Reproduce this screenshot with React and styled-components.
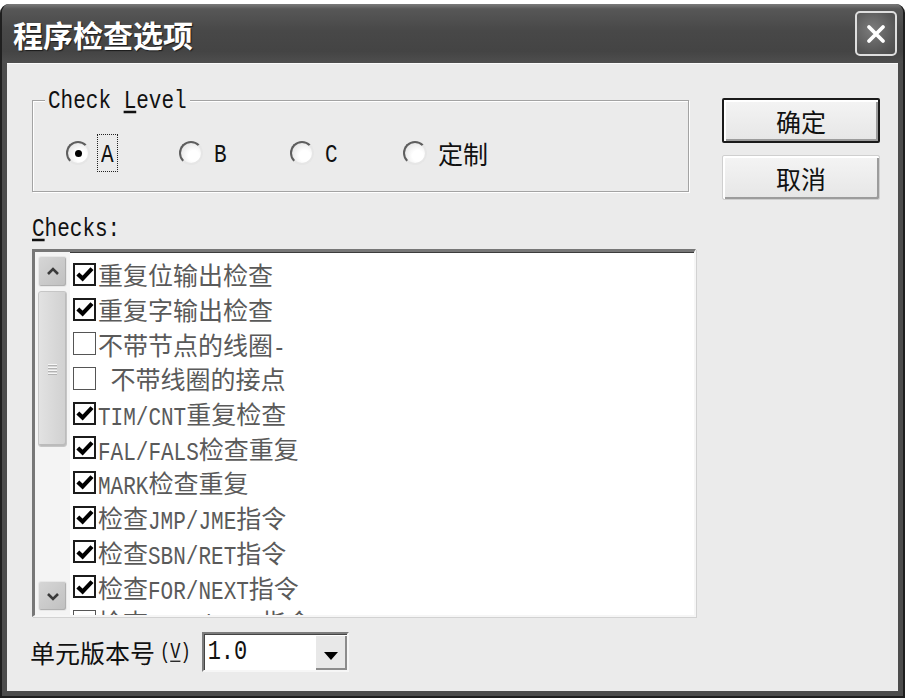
import React from 'react';
import styled, { createGlobalStyle } from 'styled-components';

const CJK = `"Noto Sans CJK SC", "Noto Sans", sans-serif`;
const MONO = `"Liberation Mono", "Noto Sans CJK SC", monospace`;

const GlobalStyle = createGlobalStyle`
  html, body { margin: 0; padding: 0; background: #fff; }
  body { width: 905px; height: 698px; overflow: hidden; font-family: ${CJK}; }
  #root { width: 905px; height: 698px; }
`;

const Window = styled.div`
  margin-top: 4px;
  width: 905px;
  height: 694px;
  box-sizing: border-box;
  display: flex;
  flex-direction: column;
  background: #4c4c4c;
  border: 2px solid #1f1f1f;
  border-top: 0;
  border-radius: 9px 9px 0 0;
  overflow: hidden;
`;

const TitleBar = styled.div`
  height: 59px;
  flex: none;
  display: flex;
  align-items: center;
  justify-content: space-between;
  padding: 0 6px 0 11px;
  background: linear-gradient(#7a7a7a 0, #575757 5px, #484848 45%, #444 80%, #4e4e4e 100%);
`;

const Title = styled.div`
  color: #fff;
  font-family: ${CJK};
  font-weight: 700;
  font-size: 30px;
  text-shadow: 1px 1px 1px #1a1a1a;
`;

const CloseButton = styled.div`
  width: 42px;
  height: 45px;
  box-sizing: border-box;
  border: 2px solid #dedede;
  border-radius: 5px;
  background: radial-gradient(circle at 40% 40%, #7c7c7c, #565656 70%, #4c4c4c);
  display: flex;
  align-items: center;
  justify-content: center;
`;

const Client = styled.div`
  flex: 1;
  margin: 0 5px 5px;
  background: #ebebeb;
  border-top: 1px solid #fafafa;
  display: grid;
  grid-template-columns: 664px 158px;
  column-gap: 26px;
  align-items: start;
  padding: 24px 0 0 25px;
`;

const LeftColumn = styled.div`
  display: flex;
  flex-direction: column;
`;

const GroupBox = styled.fieldset`
  margin: 0;
  min-width: 0;
  width: 657px;
  box-sizing: border-box;
  padding: 27px 0 24px 0;
  border: 1px solid #a3a3a3;
  box-shadow: inset 1px 1px 0 #fff, 1px 1px 0 #fff;
`;

const Legend = styled.legend`
  margin-left: 12px;
  padding: 0 3px;
  height: 24px;
  line-height: 24px;
  background: #ebebeb;
  color: #111;
`;

const Mono = styled.span`
  display: inline-block;
  font-family: ${MONO};
  font-size: ${(p) => p.$size || 21}px;
  white-space: pre;
  transform: scaleY(1.25);
`;

const Mnemonic = styled.span`
  text-decoration: underline;
  text-underline-offset: 2px;
`;

const RadioRow = styled.div`
  display: flex;
  align-items: center;
  height: 28px;
  padding-left: 33px;
`;

const RadioItem = styled.div`
  display: flex;
  align-items: center;
  gap: 11px;
  width: ${(p) => p.$w}px;
  flex: none;
`;

const RadioCircle = styled.span`
  width: 24px;
  height: 24px;
  box-sizing: border-box;
  border-radius: 50%;
  border: 2px solid;
  border-color: #5e5e5e #e6e6e6 #e6e6e6 #5e5e5e;
  background: radial-gradient(circle at 64% 64%, #ffffff 30%, #dcdcdc 100%);
  display: flex;
  align-items: center;
  justify-content: center;
  &::after {
    content: '';
    width: 7px;
    height: 7px;
    border-radius: 50%;
    background: #000;
    display: ${(p) => (p.$on ? 'block' : 'none')};
  }
`;

const RadioLabel = styled.span`
  color: #111;
  font-family: ${CJK};
  font-size: 25px;
  line-height: 30px;
  padding: 0 3px;
  border: 1px dotted ${(p) => (p.$focus ? '#222' : 'transparent')};
  margin-left: -4px;
`;

const FieldLabel = styled.div`
  margin-top: 24px;
  height: 24px;
  line-height: 24px;
  color: #111;
`;

const ListBox = styled.div`
  margin-top: 9px;
  width: 664px;
  height: 368px;
  box-sizing: border-box;
  border-style: solid;
  border-width: 3px 2px 2px 3px;
  border-color: #777 #f6f6f6 #f6f6f6 #777;
  box-shadow: inset 1px 1px 0 #3c3c3c, 1px 1px 0 #d2d2d2;
  background: #fff;
  display: flex;
  overflow: hidden;
`;

const ScrollBar = styled.div`
  width: 35px;
  flex: none;
  box-sizing: border-box;
  padding: 4px 3px 4px 3px;
  display: flex;
  flex-direction: column;
  background: #f4f4f4;
`;

const ScrollButton = styled.div`
  height: ${(p) => p.$h}px;
  flex: none;
  margin-top: ${(p) => (p.$bottom ? 'auto' : '0')};
  box-sizing: border-box;
  border: 1px solid #e8e8e8;
  border-radius: 3px;
  background: linear-gradient(135deg, #d6d6d6, #c0c0c0);
  box-shadow: inset -1px -1px 0 #b0b0b0;
  display: flex;
  align-items: center;
  justify-content: center;
`;

const Thumb = styled.div`
  margin-top: 4px;
  height: 156px;
  flex: none;
  box-sizing: border-box;
  border: 1px solid #c6c6c6;
  border-radius: 3px;
  background: linear-gradient(90deg, #e2e2e2, #d0d0d0);
  box-shadow: inset -1px -2px 0 #bbb;
  display: flex;
  align-items: center;
  justify-content: center;
`;

const Grip = styled.div`
  width: 9px;
  height: 11px;
  background: repeating-linear-gradient(#f6f6f6 0 1px, #b2b2b2 1px 2px, transparent 2px 3px);
`;

const Items = styled.div`
  flex: 1;
  padding: 5px 0 0 3px;
  display: flex;
  flex-direction: column;
`;

const Row = styled.div`
  height: 34.7px;
  flex: none;
  display: flex;
  align-items: center;
  gap: 2px;
  color: #5a5a5a;
  font-family: ${CJK};
  font-size: 25px;
  white-space: nowrap;
`;

const CheckBox = styled.span`
  width: 23px;
  height: 23px;
  flex: none;
  box-sizing: border-box;
  border: ${(p) => (p.$on ? '2px solid #1c1c1c' : '1.5px solid #555')};
  background: #fff;
  display: flex;
  align-items: center;
  justify-content: center;
`;

const RightColumn = styled.div`
  margin-top: 10px;
  display: flex;
  flex-direction: column;
  gap: 12px;
`;

const Button = styled.div`
  width: 158px;
  height: 45px;
  box-sizing: border-box;
  border: ${(p) => (p.$default ? '2px solid #1a1a1a' : '1px solid #cfcfcf')};
  border-radius: 2px;
  background: linear-gradient(#f4f4f4, #e6e6e6);
  box-shadow: inset 2px 2px 0 #fff, inset -2px -2px 0 #9c9c9c;
  display: flex;
  align-items: center;
  justify-content: center;
  font-family: ${CJK};
  font-size: 25px;
  color: #111;
`;

const BottomRow = styled.div`
  margin-top: 15px;
  height: 40px;
  display: flex;
  align-items: center;
  gap: 11px;
`;

const BottomLabel = styled.div`
  display: flex;
  align-items: center;
  gap: 5px;
  font-family: ${CJK};
  font-size: 25px;
  color: #111;
  margin-left: -2px;
  white-space: nowrap;
`;

const Combo = styled.div`
  width: 147px;
  height: 40px;
  box-sizing: border-box;
  border-style: solid;
  border-width: 2px;
  border-color: #7c7c7c #f6f6f6 #f6f6f6 #7c7c7c;
  box-shadow: inset 1px 1px 0 #444;
  background: #fff;
  display: flex;
  align-items: stretch;
`;

const ComboText = styled.div`
  flex: 1;
  display: flex;
  align-items: center;
  padding-left: 4px;
  color: #111;
`;

const DropButton = styled.div`
  width: 32px;
  flex: none;
  margin: 1px 0 0 0;
  background: #e8e8e8;
  box-shadow: inset 1px 1px 0 #fff, inset -2px -2px 0 #8c8c8c;
  display: flex;
  align-items: center;
  justify-content: center;
  padding-top: 6px;
  box-sizing: border-box;
  &::after {
    content: '';
    border-left: 7px solid transparent;
    border-right: 7px solid transparent;
    border-top: 8px solid #000;
  }
`;

const items = [
  { t: '重复位输出检查', c: true },
  { t: '重复字输出检查', c: true },
  { t: '不带节点的线圈-', c: false },
  { t: ' 不带线圈的接点', c: false },
  { t: 'TIM/CNT重复检查', c: true },
  { t: 'FAL/FALS检查重复', c: true },
  { t: 'MARK检查重复', c: true },
  { t: '检查JMP/JME指令', c: true },
  { t: '检查SBN/RET指令', c: true },
  { t: '检查FOR/NEXT指令', c: true },
  { t: '检查CALL/SRET指令', c: false },
];

function Mixed({ text }) {
  const parts = text.split(/([\x00-\x7F]+)/);
  return parts.map((p, i) =>
    i % 2 === 1 ? <Mono key={i}>{p}</Mono> : p ? <span key={i}>{p}</span> : null
  );
}

const CheckMark = () => (
  <svg width="18" height="16" viewBox="0 0 18 16">
    <path d="M1.8 8 L6.6 12.6 L16 2.6" fill="none" stroke="#000" strokeWidth="4.2" strokeLinejoin="miter" />
  </svg>
);

const Chevron = ({ down }) => (
  <svg width="14" height="9" viewBox="0 0 14 9">
    <path
      d={down ? 'M2 2 L7 7 L12 2' : 'M2 7 L7 2 L12 7'}
      fill="none"
      stroke="#3a3a3a"
      strokeWidth="2.6"
    />
  </svg>
);

export default function App() {
  return (
    <>
      <GlobalStyle />
      <Window>
        <TitleBar>
          <Title>程序检查选项</Title>
          <CloseButton>
            <svg width="22" height="22" viewBox="0 0 22 22">
              <path d="M4 4 L18 18 M18 4 L4 18" stroke="#fff" strokeWidth="3.8" strokeLinecap="round" />
            </svg>
          </CloseButton>
        </TitleBar>
        <Client>
          <LeftColumn>
            <GroupBox>
              <Legend>
                <Mono>Check </Mono>
                <Mono><Mnemonic>L</Mnemonic>evel</Mono>
              </Legend>
              <RadioRow>
                <RadioItem $w={113}>
                  <RadioCircle $on />
                  <RadioLabel $focus><Mono>A</Mono></RadioLabel>
                </RadioItem>
                <RadioItem $w={111}>
                  <RadioCircle />
                  <RadioLabel><Mono>B</Mono></RadioLabel>
                </RadioItem>
                <RadioItem $w={113}>
                  <RadioCircle />
                  <RadioLabel><Mono>C</Mono></RadioLabel>
                </RadioItem>
                <RadioItem $w={120}>
                  <RadioCircle />
                  <RadioLabel>定制</RadioLabel>
                </RadioItem>
              </RadioRow>
            </GroupBox>
            <FieldLabel>
              <Mono><Mnemonic>C</Mnemonic>hecks:</Mono>
            </FieldLabel>
            <ListBox>
              <ScrollBar>
                <ScrollButton $h={31}><Chevron /></ScrollButton>
                <Thumb><Grip /></Thumb>
                <ScrollButton $h={30} $bottom><Chevron down /></ScrollButton>
              </ScrollBar>
              <Items>
                {items.map((it, i) => (
                  <Row key={i}>
                    <CheckBox $on={it.c}>{it.c && <CheckMark />}</CheckBox>
                    <span><Mixed text={it.t} /></span>
                  </Row>
                ))}
              </Items>
            </ListBox>
            <BottomRow>
              <BottomLabel>
                <span>单元版本号</span>
                <Mono $size={17}>(<Mnemonic>V</Mnemonic>)</Mono>
              </BottomLabel>
              <Combo>
                <ComboText><Mono $size={22}>1.0</Mono></ComboText>
                <DropButton />
              </Combo>
            </BottomRow>
          </LeftColumn>
          <RightColumn>
            <Button $default>确定</Button>
            <Button>取消</Button>
          </RightColumn>
        </Client>
      </Window>
    </>
  );
}
